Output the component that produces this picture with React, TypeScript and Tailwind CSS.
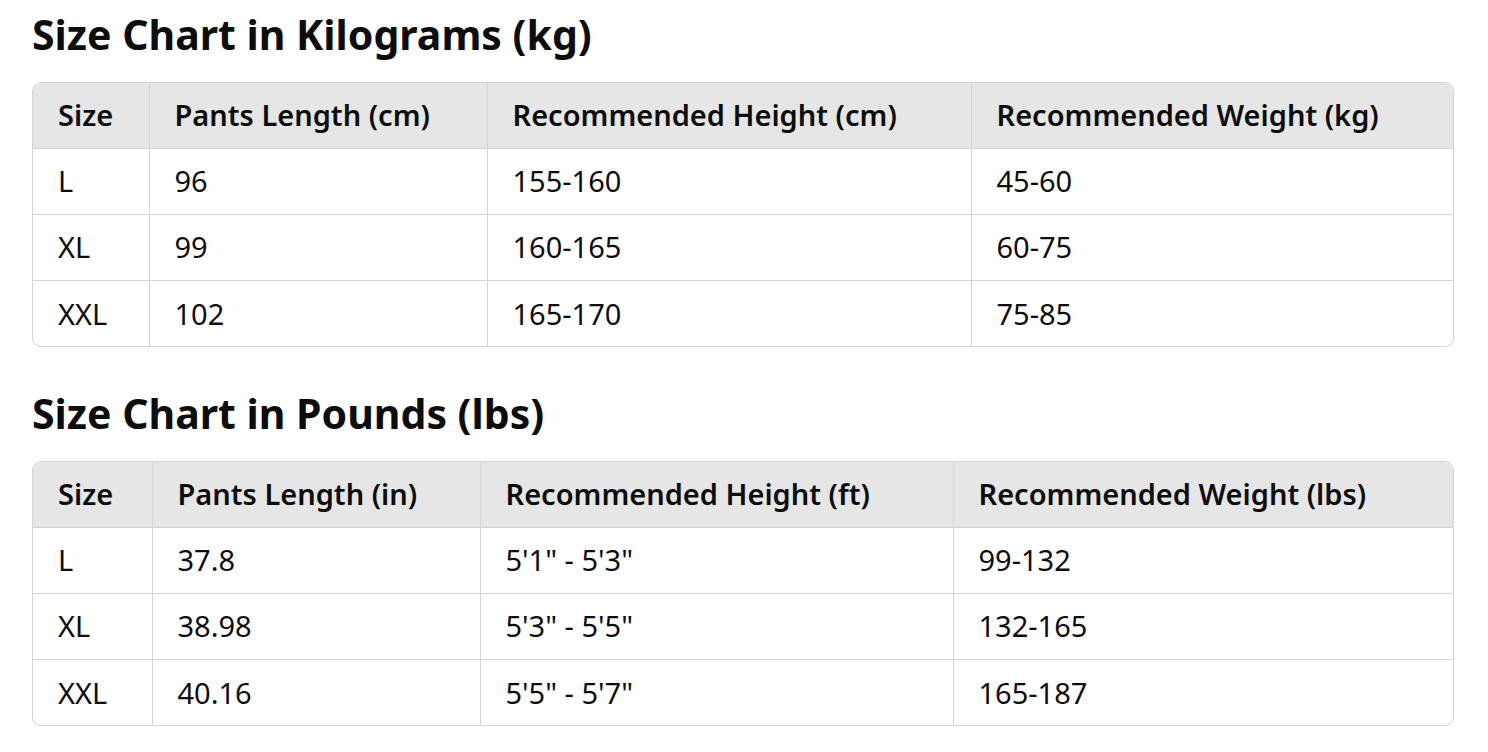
type Chart = {
  title: string;
  cols: number[];
  headers: string[];
  rows: string[][];
};

const charts: Chart[] = [
  {
    title: "Size Chart in Kilograms (kg)",
    cols: [116, 338, 484],
    headers: ["Size", "Pants Length (cm)", "Recommended Height (cm)", "Recommended Weight (kg)"],
    rows: [
      ["L", "96", "155-160", "45-60"],
      ["XL", "99", "160-165", "60-75"],
      ["XXL", "102", "165-170", "75-85"],
    ],
  },
  {
    title: "Size Chart in Pounds (lbs)",
    cols: [119, 328, 473],
    headers: ["Size", "Pants Length (in)", "Recommended Height (ft)", "Recommended Weight (lbs)"],
    rows: [
      ["L", "37.8", "5'1\" - 5'3\"", "99-132"],
      ["XL", "38.98", "5'3\" - 5'5\"", "132-165"],
      ["XXL", "40.16", "5'5\" - 5'7\"", "165-187"],
    ],
  },
];

function SizeTable({ chart }: { chart: Chart }) {
  return (
    <div className="mt-[24px] overflow-hidden rounded-[9px] border border-[#d4d4d4]">
      <table className="w-full table-fixed border-collapse">
        <colgroup>
          {chart.cols.map((w, i) => (
            <col key={i} style={{ width: w }} />
          ))}
          <col />
        </colgroup>
        <thead>
          <tr className="h-[65px] bg-[#e6e6e6]">
            {chart.headers.map((h, i) => (
              <th
                key={h}
                className={`pb-[2px] pl-[25px] text-left text-[29px] font-semibold text-[#0d0d0d] ${
                  i > 0 ? "border-l border-[#d4d4d4]" : ""
                }`}
              >
                {h}
              </th>
            ))}
          </tr>
        </thead>
        <tbody>
          {chart.rows.map((row) => (
            <tr key={row[0]} className="h-[66px]">
              {row.map((cell, i) => (
                <td
                  key={i}
                  className={`border-t border-[#d4d4d4] pl-[25px] text-[29px] text-[#0d0d0d] ${
                    i > 0 ? "border-l" : ""
                  }`}
                >
                  {cell}
                </td>
              ))}
            </tr>
          ))}
        </tbody>
      </table>
    </div>
  );
}

export default function App() {
  return (
    <div className="min-h-screen bg-white pl-[32px] pr-[34px] pt-[10px] font-['Noto_Sans','Open_Sans',sans-serif]">
      {charts.map((chart, idx) => (
        <section key={chart.title} className={idx > 0 ? "mt-[42px]" : ""}>
          <h2 className="text-[41px] font-bold leading-[48px] text-[#0d0d0d]">{chart.title}</h2>
          <SizeTable chart={chart} />
        </section>
      ))}
    </div>
  );
}
